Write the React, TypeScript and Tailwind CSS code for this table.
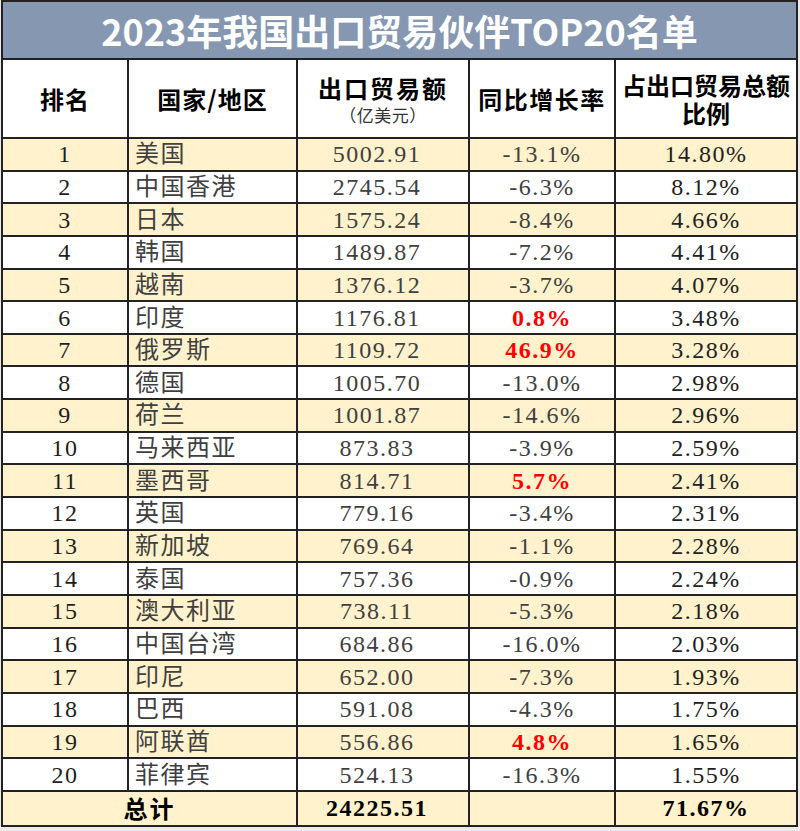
import React from 'react';

type Row = {
    rank: number;
    name: string;
    amount: string;
    growth: string;
    share: string;
    up?: boolean;
};

const rows: Row[] = [
    { rank: 1, name: '美国', amount: '5002.91', growth: '-13.1%', share: '14.80%' },
    { rank: 2, name: '中国香港', amount: '2745.54', growth: '-6.3%', share: '8.12%' },
    { rank: 3, name: '日本', amount: '1575.24', growth: '-8.4%', share: '4.66%' },
    { rank: 4, name: '韩国', amount: '1489.87', growth: '-7.2%', share: '4.41%' },
    { rank: 5, name: '越南', amount: '1376.12', growth: '-3.7%', share: '4.07%' },
    { rank: 6, name: '印度', amount: '1176.81', growth: '0.8%', share: '3.48%', up: true },
    { rank: 7, name: '俄罗斯', amount: '1109.72', growth: '46.9%', share: '3.28%', up: true },
    { rank: 8, name: '德国', amount: '1005.70', growth: '-13.0%', share: '2.98%' },
    { rank: 9, name: '荷兰', amount: '1001.87', growth: '-14.6%', share: '2.96%' },
    { rank: 10, name: '马来西亚', amount: '873.83', growth: '-3.9%', share: '2.59%' },
    { rank: 11, name: '墨西哥', amount: '814.71', growth: '5.7%', share: '2.41%', up: true },
    { rank: 12, name: '英国', amount: '779.16', growth: '-3.4%', share: '2.31%' },
    { rank: 13, name: '新加坡', amount: '769.64', growth: '-1.1%', share: '2.28%' },
    { rank: 14, name: '泰国', amount: '757.36', growth: '-0.9%', share: '2.24%' },
    { rank: 15, name: '澳大利亚', amount: '738.11', growth: '-5.3%', share: '2.18%' },
    { rank: 16, name: '中国台湾', amount: '684.86', growth: '-16.0%', share: '2.03%' },
    { rank: 17, name: '印尼', amount: '652.00', growth: '-7.3%', share: '1.93%' },
    { rank: 18, name: '巴西', amount: '591.08', growth: '-4.3%', share: '1.75%' },
    { rank: 19, name: '阿联酋', amount: '556.86', growth: '4.8%', share: '1.65%', up: true },
    { rank: 20, name: '菲律宾', amount: '524.13', growth: '-16.3%', share: '1.55%' },
];

const cellFont = "font-['Liberation_Serif','Noto_Sans_CJK_SC',serif] text-[24px] tracking-[1.5px]";
const headFont = "font-['Noto_Sans_CJK_SC',sans-serif] font-bold text-[24px] text-black";

export default function App() {
    return (
        <div className="min-h-screen bg-[#ebebeb]">
            <div className="ml-[1px] w-[797px] grid grid-cols-[124px_167px_170px_144px_180px] gap-[2px] p-[2px] bg-[#222]">
                {/* title */}
                <div className="col-span-5 h-[56px] bg-[#8698b1] flex items-center justify-center">
                    <span className="font-['Noto_Sans_CJK_SC',sans-serif] font-bold text-[36px] leading-none text-white">
                        2023年我国出口贸易伙伴TOP20名单
                    </span>
                </div>

                {/* header */}
                <div className={`h-[77px] bg-white flex items-center justify-center tracking-[1px] ${headFont}`}>排名</div>
                <div className={`h-[77px] bg-white flex items-center justify-center tracking-[1px] ${headFont}`}>国家/地区</div>
                <div className="h-[77px] bg-white flex flex-col items-center justify-center pt-[2px]">
                    <div className={`leading-[30px] tracking-[2px] ${headFont}`}>出口贸易额</div>
                    <div className="font-['Noto_Sans_CJK_SC',sans-serif] text-[17px] leading-[24px] tracking-[0.5px] text-[#333]">（亿美元）</div>
                </div>
                <div className={`h-[77px] bg-white flex items-center justify-center tracking-[1.5px] ${headFont}`}>同比增长率</div>
                <div className={`h-[77px] bg-white flex flex-col items-center justify-center text-[23px] ${headFont}`}>
                    <div className="leading-[28px]">占出口贸易总额</div>
                    <div className="leading-[28px]">比例</div>
                </div>

                {/* data rows */}
                {rows.map((r) => {
                    const bg = r.rank % 2 === 1 ? 'bg-[#fff2cc]' : 'bg-white';
                    return (
                        <React.Fragment key={r.rank}>
                            <div className={`h-[30.65px] ${bg} flex items-center justify-center text-[#1e1e1e] ${cellFont}`}>{r.rank}</div>
                            <div className={`h-[30.65px] ${bg} flex items-center pl-[6px] text-[#404040] tracking-[0px] ${cellFont}`}>{r.name}</div>
                            <div className={`h-[30.65px] ${bg} flex items-center justify-center pr-[12px] text-[#404040] ${cellFont}`}>{r.amount}</div>
                            <div className={`h-[30.65px] ${bg} flex items-center justify-center ${cellFont} ${r.up ? 'text-[#ff0000] font-bold' : 'text-[#404040]'}`}>{r.growth}</div>
                            <div className={`h-[30.65px] ${bg} flex items-center justify-center text-[#222] ${cellFont}`}>{r.share}</div>
                        </React.Fragment>
                    );
                })}

                {/* total */}
                <div className={`col-span-2 h-[33px] bg-[#fff2cc] flex items-center justify-center tracking-[2px] ${headFont}`}>总计</div>
                <div className={`h-[33px] bg-[#fff2cc] flex items-center justify-center pr-[12px] text-black font-bold ${cellFont}`}>24225.51</div>
                <div className="h-[33px] bg-[#fff2cc]" />
                <div className={`h-[33px] bg-[#fff2cc] flex items-center justify-center text-black font-bold ${cellFont}`}>71.67%</div>
            </div>
        </div>
    );
}
